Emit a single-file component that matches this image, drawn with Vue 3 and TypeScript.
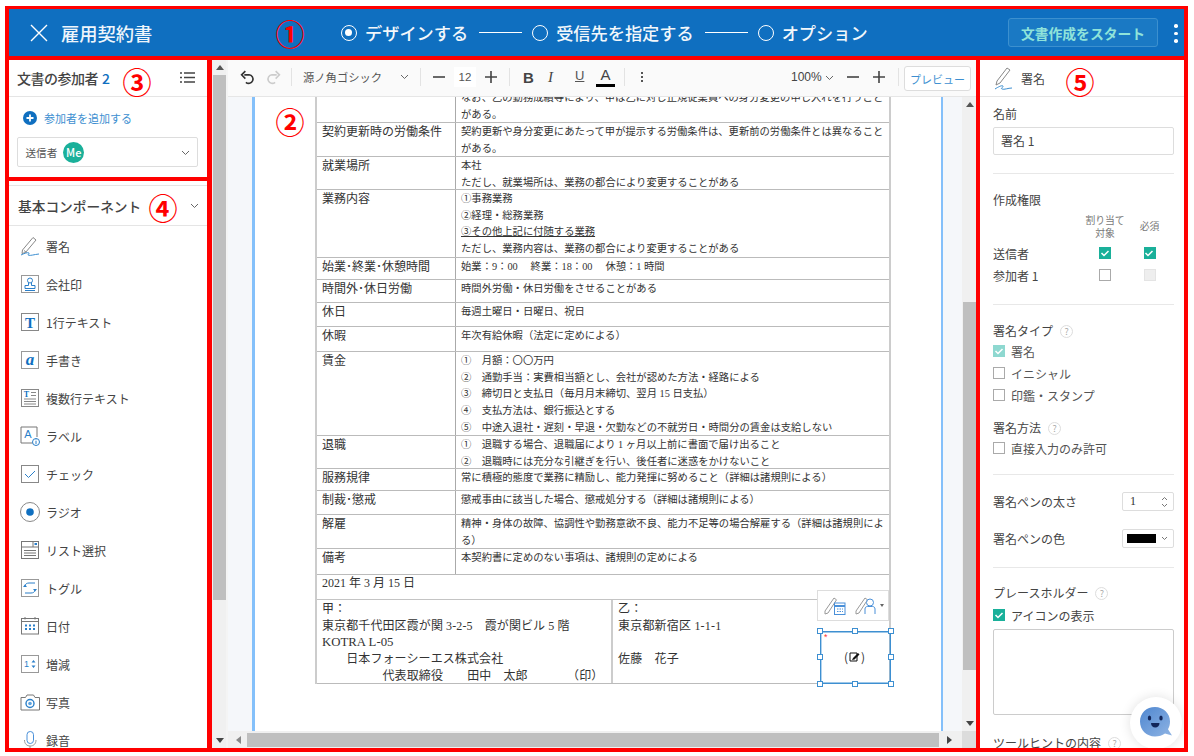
<script setup lang="ts">
interface Row { h: number; left: string; right: string[]; under?: number }

const C = '\uFF1A'
const O = '\uFF08'
const E = '\uFF09'

const rows: Row[] = [
  { h: 34, left: '', right: ['なお、乙の勤務成績等により、甲は乙に対し正規従業員への身分変更の申し入れを行うこと', 'がある。'] },
  { h: 34, left: '契約更新時の労働条件', right: ['契約更新や身分変更にあたって甲が提示する労働条件は、更新前の労働条件とは異なること', 'がある。'] },
  { h: 33, left: '就業場所', right: ['本社', 'ただし、就業場所は、業務の都合により変更することがある'] },
  { h: 68, left: '業務内容', right: ['①事務業務', '②経理・総務業務', '③その他上記に付随する業務', 'ただし、業務内容は、業務の都合により変更することがある'], under: 2 },
  { h: 22, left: '始業･終業･休憩時間', right: [`始業${C}9${C}00　 終業${C}18${C}00　 休憩${C}1 時間`] },
  { h: 23, left: '時間外･休日労働', right: ['時間外労働・休日労働をさせることがある'] },
  { h: 24, left: '休日', right: ['毎週土曜日・日曜日、祝日'] },
  { h: 25, left: '休暇', right: [`年次有給休暇${O}法定に定めによる${E}`] },
  { h: 84, left: '賃金', right: [`①　月額${C}〇〇万円`, `②　通勤手当${C}実費相当額とし、会社が認めた方法・経路による`, `③　締切日と支払日${O}毎月月末締切、翌月 15 日支払${E}`, '④　支払方法は、銀行振込とする', '⑤　中途入退社・遅刻・早退・欠勤などの不就労日・時間分の賃金は支給しない'] },
  { h: 33, left: '退職', right: ['①　退職する場合、退職届により 1 ヶ月以上前に書面で届け出ること', '②　退職時には充分な引継ぎを行い、後任者に迷惑をかけないこと'] },
  { h: 22, left: '服務規律', right: [`常に積極的態度で業務に精励し、能力発揮に努めること${O}詳細は諸規則による${E}`] },
  { h: 24, left: '制裁･懲戒', right: [`懲戒事由に該当した場合、懲戒処分する${O}詳細は諸規則による${E}`] },
  { h: 34, left: '解雇', right: [`精神・身体の故障、協調性や勤務意欲不良、能力不足等の場合解雇する${O}詳細は諸規則によ`, `る${E}`] },
  { h: 26, left: '備考', right: ['本契約書に定めのない事項は、諸規則の定めによる'] },
]

const kou = [
  `甲${C}`,
  '東京都千代田区霞が関 3-2-5　霞が関ビル 5 階',
  'KOTRA L-05',
  '　　日本フォーシーエス株式会社',
  `　　　　　代表取締役　　田中　太郎　　　 ${O}印${E}`,
]
const otsu = [`乙${C}`, '東京都新宿区 1-1-1', '\u00a0', '佐藤　花子']

const components = [
  { icon: 'pen', label: '署名' },
  { icon: 'stamp', label: '会社印' },
  { icon: 'text', label: '1行テキスト' },
  { icon: 'hand', label: '手書き' },
  { icon: 'multi', label: '複数行テキスト' },
  { icon: 'tag', label: 'ラベル' },
  { icon: 'check', label: 'チェック' },
  { icon: 'radio', label: 'ラジオ' },
  { icon: 'list', label: 'リスト選択' },
  { icon: 'toggle', label: 'トグル' },
  { icon: 'date', label: '日付' },
  { icon: 'num', label: '増減' },
  { icon: 'photo', label: '写真' },
  { icon: 'mic', label: '録音' },
]

const handles = ['tl', 'tc', 'tr', 'ml', 'mr', 'bl', 'bc', 'br']
</script>

<template>
  <div class="frame">
    <header class="topbar">
      <svg class="close" width="18" height="18" viewBox="0 0 18 18"><path d="M1 1l16 16M17 1L1 17" stroke="#fff" stroke-width="1.4" fill="none" /></svg>
      <span class="doc-title">雇用契約書</span>
      <nav class="steps">
        <span class="radio on"></span><span class="step">デザインする</span>
        <span class="line"></span>
        <span class="radio"></span><span class="step">受信先を指定する</span>
        <span class="line"></span>
        <span class="radio"></span><span class="step">オプション</span>
      </nav>
      <button class="start">文書作成をスタート</button>
      <span class="kebab"><i></i><i></i><i></i></span>
    </header>

    <aside class="left">
      <section class="participants">
        <div class="p-head">
          <span class="p-title">文書の参加者</span><b class="p-count">2</b>
          <svg class="p-list" width="15" height="11" viewBox="0 0 15 11"><path d="M0 1h2M4 1h11M0 5.500h2M4 5.500h11M0 10h2M4 10h11" stroke="#444" stroke-width="1.300" /></svg>
        </div>
        <div class="p-add">
          <svg width="14" height="14" viewBox="0 0 14 14"><circle cx="7" cy="7" r="7" fill="#0f6fc0" /><path d="M7 3.500v7M3.500 7h7" stroke="#fff" stroke-width="1.800" /></svg>
          <span>参加者を追加する</span>
        </div>
        <div class="p-select">
          <span>送信者</span><span class="me">Me</span>
          <svg class="chev" width="9" height="6" viewBox="0 0 9 6"><path d="M1 1l3.500 3.500L8 1" stroke="#666" fill="none" /></svg>
        </div>
      </section>

      <section class="palette">
        <div class="pal-head">
          <span>基本コンポーネント</span>
          <svg width="9" height="6" viewBox="0 0 9 6"><path d="M1 1l3.500 3.500L8 1" stroke="#666" fill="none" /></svg>
        </div>
        <ul class="pal-list">
          <li v-for="c in components" :key="c.label">
            <svg class="pal-icon" width="20" height="20" viewBox="0 0 20 20" fill="none">
              <template v-if="c.icon === 'pen'">
                <path d="M2.500 14L13 1.500l3 2.500L5.500 16.500l-3.500 1z" stroke="#888" />
                <path d="M4 14.500l2.500 2" stroke="#888" />
                <path d="M1 19c3-1.500 7-3 8-2s-2.500 1.500-.5 2.200S14 18.500 19 18" stroke="#3d8fd1" />
              </template>
              <template v-else-if="c.icon === 'stamp'">
                <rect x="1.500" y="1.500" width="17" height="17" stroke="#999" />
                <circle cx="10" cy="6.500" r="2.500" stroke="#2a7fc9" />
                <path d="M8.500 9v2.500H5v3h10v-3h-3.500V9M5 16.500h10" stroke="#2a7fc9" />
              </template>
              <template v-else-if="c.icon === 'text'">
                <rect x="1.500" y="1.500" width="17" height="17" stroke="#888" />
                <text x="10" y="15.500" text-anchor="middle" class="svg-t">T</text>
              </template>
              <template v-else-if="c.icon === 'hand'">
                <rect x="1.500" y="1.500" width="17" height="17" stroke="#999" />
                <text x="10" y="14.500" text-anchor="middle" class="svg-a">a</text>
              </template>
              <template v-else-if="c.icon === 'multi'">
                <rect x="1.500" y="1.500" width="17" height="17" stroke="#888" />
                <text x="6.500" y="9" text-anchor="middle" class="svg-s">T</text>
                <path d="M11 4.500h5M11 7.500h5" stroke="#888" />
                <path d="M4 11h12M4 13.500h12M4 16h12" stroke="#888" />
              </template>
              <template v-else-if="c.icon === 'tag'">
                <path d="M14 17H1V1h16v10" stroke="#777" />
                <text x="8" y="12" text-anchor="middle" class="svg-m">A</text>
                <circle cx="16" cy="16" r="3.500" stroke="#2a7fc9" fill="#fff" />
                <path d="M16 15v3M16 13.500v.8" stroke="#2a7fc9" />
              </template>
              <template v-else-if="c.icon === 'check'">
                <rect x="1.500" y="1.500" width="17" height="17" stroke="#888" />
                <path d="M5 10l3.500 3.500L15 7" stroke="#2a7fc9" />
              </template>
              <template v-else-if="c.icon === 'radio'">
                <circle cx="10" cy="10" r="9.500" stroke="#888" />
                <circle cx="10" cy="10" r="3.800" fill="#0f6fc0" />
              </template>
              <template v-else-if="c.icon === 'list'">
                <rect x="1.500" y="1.500" width="17" height="17" stroke="#777" />
                <path d="M1.500 7h17M13 1.500V7M4 10.500h12M4 13h12M4 15.500h12" stroke="#777" />
                <rect x="14.500" y="3" width="2.500" height="2" fill="#2a7fc9" />
              </template>
              <template v-else-if="c.icon === 'toggle'">
                <rect x="1.500" y="1.500" width="17" height="17" stroke="#999" />
                <path d="M5 8c0-2 2-3 4-3h6M15 12c0 2-2 3-4 3H5" stroke="#2a7fc9" />
                <path d="M3 9h4L5 6.500zM13 11h4l-2 2.500z" fill="#2a7fc9" />
              </template>
              <template v-else-if="c.icon === 'date'">
                <rect x="1.500" y="2.500" width="17" height="15.500" stroke="#777" />
                <path d="M1.500 5.500h17M5 1v2.500M15 1v2.500" stroke="#777" />
                <path d="M5 9.500h2M9 9.500h2M13 9.500h2M5 13h2M9 13h2M13 13h2" stroke="#2a7fc9" stroke-width="2" />
              </template>
              <template v-else-if="c.icon === 'num'">
                <rect x="1.500" y="1.500" width="17" height="17" stroke="#999" />
                <text x="6.500" y="13" text-anchor="middle" class="svg-n">1</text>
                <path d="M11.500 8.500h4L13.500 6zM11.500 11.500h4l-2 2.500z" fill="#2a7fc9" />
              </template>
              <template v-else-if="c.icon === 'photo'">
                <path d="M1 5.500h4.500L7 3h6.500L15 5.500h4.500V18H1z" stroke="#777" />
                <circle cx="10" cy="11.500" r="4" stroke="#2a7fc9" stroke-width="1.400" />
                <circle cx="10" cy="11.500" r="1.800" fill="#5ba3e0" />
              </template>
              <template v-else>
                <rect x="7" y="1.500" width="6.500" height="12" rx="3.200" stroke="#4a90d9" />
                <path d="M4.500 10c0 4 2.500 6 5.700 6s5.800-2 5.800-6M10 16v3" stroke="#999" />
              </template>
            </svg>
            <span>{{ c.label }}</span>
          </li>
        </ul>
      </section>
    </aside>

    <main class="center">
      <div class="outer-bar">
        <span class="arr up"></span>
        <span class="outer-thumb"></span>
        <span class="outer-rest"></span>
        <span class="arr down"></span>
      </div>
      <div class="editor">
        <div class="toolbar">
          <svg class="t-undo" width="15" height="15" viewBox="0 0 14 14" fill="none"><path d="M4 4.500h4.500a4 4 0 1 1-3 7" stroke="#333" stroke-width="1.500" /><path d="M5 1L1.500 4.500 5 8" stroke="#333" stroke-width="1.500" /></svg>
          <svg class="t-redo" width="15" height="15" viewBox="0 0 14 14" fill="none"><path d="M10 4.500H5.500a4 4 0 1 0 3 7" stroke="#ccc" stroke-width="1.500" /><path d="M9 1l3.500 3.500L9 8" stroke="#ccc" stroke-width="1.500" /></svg>
          <i class="sep s1"></i>
          <span class="t-font">源ノ角ゴシック</span>
          <svg class="t-chev" width="9" height="6" viewBox="0 0 9 6"><path d="M1 1l3.500 3.500L8 1" stroke="#666" fill="none" /></svg>
          <i class="sep s2"></i>
          <svg class="t-minus" width="12" height="12" viewBox="0 0 12 12"><path d="M0 6h12" stroke="#444" stroke-width="1.600" /></svg>
          <span class="t-size">12</span>
          <svg class="t-plus" width="12" height="12" viewBox="0 0 12 12"><path d="M0 6h12M6 0v12" stroke="#444" stroke-width="1.600" /></svg>
          <i class="sep s3"></i>
          <b class="t-b">B</b>
          <em class="t-i">I</em>
          <span class="t-u">U</span>
          <span class="t-a">A</span>
          <i class="sep s4"></i>
          <span class="t-k"><i></i><i></i><i></i></span>
          <span class="t-zoom">100%</span>
          <svg class="t-zchev" width="9" height="6" viewBox="0 0 9 6"><path d="M1 1l3.500 3.500L8 1" stroke="#666" fill="none" /></svg>
          <svg class="t-zminus" width="12" height="12" viewBox="0 0 12 12"><path d="M0 6h12" stroke="#444" stroke-width="1.600" /></svg>
          <svg class="t-zplus" width="12" height="12" viewBox="0 0 12 12"><path d="M0 6h12M6 0v12" stroke="#444" stroke-width="1.600" /></svg>
          <i class="sep s5"></i>
          <button class="preview">プレビュー</button>
        </div>

        <div class="doc-row">
          <div class="doc">
            <div class="page">
              <div class="contract">
                <div v-for="(r, i) in rows" :key="i" class="row" :style="{ height: r.h + 'px' }">
                  <div class="l">{{ r.left }}</div>
                  <div class="r"><div v-for="(t, j) in r.right" :key="j" :class="{ under: r.under === j }">{{ t }}</div></div>
                </div>
                <div class="row date-row">2021 年 3 月 15 日</div>
                <div class="row sign-row">
                  <div class="kou"><div v-for="t in kou" :key="t" :class="{ kotra: t.startsWith('KOTRA') }">{{ t }}</div></div>
                  <div class="otsu"><div v-for="t in otsu" :key="t">{{ t }}</div></div>
                </div>
              </div>

              <div class="popup">
                <svg width="22" height="20" viewBox="0 0 22 20" fill="none">
                  <path d="M1 15L10 2l2.500 1.800L4 17l-3 1z" stroke="#999" />
                  <rect x="10.500" y="7" width="10.500" height="11.500" fill="#fff" stroke="#4a90d9" />
                  <path d="M10.500 10h10.500" stroke="#4a90d9" stroke-width="2" />
                  <path d="M13 13h6M13 15.500h6" stroke="#4a90d9" stroke-dasharray="1.500 1" />
                </svg>
                <svg width="22" height="20" viewBox="0 0 22 20" fill="none">
                  <path d="M1 15L10 2l2.500 1.800L4 17l-3 1z" stroke="#999" />
                  <circle cx="15" cy="6.500" r="3.500" fill="#fff" stroke="#4a90d9" />
                  <path d="M10 18v-5c0-1.500 1-2.500 2.500-2.500h5c1.500 0 2.500 1 2.500 2.500v5" stroke="#4a90d9" />
                </svg>
                <span class="caret"></span>
              </div>

              <div class="field">
                <i class="req">*</i>
                <span class="field-mark">(<svg width="11" height="10" viewBox="0 0 11 10"><path d="M1 1h7v8H1z" fill="none" stroke="#111" /><path d="M3 8l1-2 5-5 1.500 1.500-5 5z" fill="#111" /></svg>)</span>
                <i v-for="h in handles" :key="h" class="handle" :class="h"></i>
              </div>
            </div>
          </div>
          <div class="v-bar">
            <span class="arr up"></span>
            <span class="v-top"></span>
            <span class="v-thumb"></span>
            <span class="v-rest"></span>
            <span class="arr down"></span>
          </div>
        </div>

        <div class="h-bar">
          <span class="arr lf"></span>
          <span class="h-thumb"></span>
          <span class="arr rt"></span>
          <span class="corner"></span>
        </div>
      </div>
    </main>

    <aside class="props">
      <div class="pr-head">
        <svg width="20" height="24" viewBox="0 0 20 24" fill="none">
          <path d="M3 15L13 2l3 2L6 17l-4 2z" stroke="#888" />
          <path d="M1 23c3-2 7-4 8-3s-3 2-1 3 6-1 10-1" stroke="#3d8fd1" />
        </svg>
        <span>署名</span>
      </div>
      <div class="pr-body">
        <div class="lab first">名前</div>
        <div class="input">署名 1</div>
        <hr class="h1" />
        <div class="lab perm">作成権限</div>
        <div class="pgrid">
          <span></span><span class="th">割り当て<br />対象</span><span class="th">必須</span>
          <span class="pr">送信者</span><span class="cell"><span class="cb on"><svg width="12" height="12" viewBox="0 0 12 12"><path d="M2.500 6l2.500 2.500 4.500-4.500" stroke="#fff" stroke-width="1.500" fill="none" /></svg></span></span><span class="cell"><span class="cb on"><svg width="12" height="12" viewBox="0 0 12 12"><path d="M2.500 6l2.500 2.500 4.500-4.500" stroke="#fff" stroke-width="1.500" fill="none" /></svg></span></span>
          <span class="pr">参加者 1</span><span class="cell"><span class="cb"></span></span><span class="cell"><span class="cb dis"></span></span>
        </div>
        <hr class="h2" />
        <div class="lab sig">署名タイプ<span class="q">?</span></div>
        <label class="opt"><span class="cb soft"><svg width="12" height="12" viewBox="0 0 12 12"><path d="M2.500 6l2.500 2.500 4.500-4.500" stroke="#fff" stroke-width="1.500" fill="none" /></svg></span>署名</label>
        <label class="opt"><span class="cb"></span>イニシャル</label>
        <label class="opt"><span class="cb"></span>印鑑・スタンプ</label>
        <div class="lab method">署名方法<span class="q">?</span></div>
        <label class="opt"><span class="cb"></span>直接入力のみ許可</label>
        <hr class="h3" />
        <div class="pair p1">
          <span>署名ペンの太さ</span>
          <div class="mini"><span class="num">1</span><svg width="7" height="12" viewBox="0 0 7 12"><path d="M1 4l2.500-2.500L6 4M1 8l2.500 2.500L6 8" stroke="#777" fill="none" /></svg></div>
        </div>
        <div class="pair p2">
          <span>署名ペンの色</span>
          <div class="mini"><i class="swatch"></i><svg width="7" height="5" viewBox="0 0 7 5"><path d="M1 1l2.500 2.500L6 1" stroke="#777" fill="none" /></svg></div>
        </div>
        <hr class="h4" />
        <div class="lab ph">プレースホルダー<span class="q">?</span></div>
        <label class="opt ph-opt"><span class="cb on"><svg width="12" height="12" viewBox="0 0 12 12"><path d="M2.500 6l2.500 2.500 4.500-4.500" stroke="#fff" stroke-width="1.500" fill="none" /></svg></span>アイコンの表示</label>
        <div class="area"></div>
        <div class="lab tip">ツールヒントの内容<span class="q">?</span></div>
      </div>
      <div class="chat">
        <svg width="34" height="34" viewBox="0 0 34 34">
          <defs><linearGradient id="bub" x1="0" y1="0" x2="1" y2="1"><stop offset="0" stop-color="#4f87d0" /><stop offset="1" stop-color="#8fb4e4" /></linearGradient></defs>
          <path d="M16 1c8.500 0 15 6.500 15 14.500 0 3-.7 5.500-2 7.700l4 6.300-7-2c-2.700 2-6 3-10 3C7.500 30.500 1 24 1 15.500S7.500 1 16 1z" fill="url(#bub)" />
          <ellipse cx="10.500" cy="12" rx="1.700" ry="2.600" fill="#12265a" />
          <ellipse cx="22" cy="12" rx="1.700" ry="2.600" fill="#12265a" />
          <path d="M12 17h8.500c0 2.800-1.800 4.500-4.250 4.500S12 19.800 12 17z" fill="#12265a" />
        </svg>
      </div>
    </aside>

    <span class="ann a1">①</span>
    <span class="ann a2">②</span>
    <span class="ann a3">③</span>
    <span class="ann a4">④</span>
    <span class="ann a5">⑤</span>
  </div>
</template>

<style>
html, body { margin: 0; background: #fff; overflow: hidden; }
</style>

<style scoped>
* { box-sizing: border-box; }
.frame {
  position: relative;
  margin: 6px 6px 0 5px;
  width: 1183px;
  height: 746px;
  padding: 3px 4px 4px;
  background: #f00;
  display: grid;
  grid-template-columns: 198px 765px 204px;
  grid-template-rows: 47px 688px;
  column-gap: 4px;
  row-gap: 4px;
  font-family: "Noto Sans CJK JP", "Noto Sans", sans-serif;
  color: #444;
  font-size: 12px;
}

/* header */
.topbar {
  grid-column: 1 / -1;
  background: #0f6fc0;
  display: flex;
  align-items: center;
  color: #fff;
  position: relative;
}
.close { margin-left: 21px; }
.doc-title { margin-left: 13px; font-size: 18.300px; font-weight: 500; color: #eef5fb; }
.steps { position: absolute; left: 332px; top: 0; height: 47px; display: flex; align-items: center; }
.radio { width: 16px; height: 16px; border: 1.500px solid #fff; border-radius: 50%; position: relative; flex: none; }
.radio.on::after { content: ""; position: absolute; left: 3px; top: 3px; width: 7px; height: 7px; background: #fff; border-radius: 50%; }
.step { margin-left: 8px; font-size: 17.200px; font-weight: 500; color: #f2f7fb; white-space: nowrap; }
.line { width: 43px; height: 1px; background: #fff; margin: 0 10px 0 11px; flex: none; }
.start {
  position: absolute; left: 999px; top: 9px; width: 150px; height: 29px;
  background: #1a79c4; border: 1px solid #3c90cf; border-radius: 3px;
  color: #8fe3da; font: 700 13.800px "Noto Sans CJK JP", sans-serif; padding: 0;
}
.kebab { position: absolute; left: 1165px; top: 15px; display: flex; flex-direction: column; gap: 4px; }
.kebab i { width: 3.500px; height: 3.500px; background: #fff; border-radius: 50%; }

/* left */
.left { display: flex; flex-direction: column; gap: 4px; min-height: 0; }
.participants { height: 117px; background: #fff; flex: none; }
.p-head { height: 37px; border-bottom: 1px solid #e5e5e5; display: flex; align-items: center; padding-left: 8px; position: relative; }
.p-title { font-size: 14px; font-weight: 500; color: #444; letter-spacing: -0.500px; }
.p-count { font-size: 14px; color: #0f6fc0; margin-left: 4px; font-weight: 500; }
.p-list { position: absolute; left: 171px; top: 12px; }
.p-add { display: flex; align-items: center; margin: 14px 0 0 14px; gap: 7px; color: #3d8fd1; font-size: 11px; height: 14px; }
.p-select {
  margin: 12px 0 0 7.500px; width: 181px; height: 30px; border: 1px solid #ddd; border-radius: 2px;
  display: flex; align-items: center; padding-left: 8px; font-size: 10.600px; position: relative; color: #555;
}
.me { margin-left: 6px; width: 21px; height: 21px; border-radius: 50%; background: #1ab09a; color: #fff; font-size: 11px; font-weight: 500; display: flex; align-items: center; justify-content: center; }
.chev { position: absolute; right: 7px; top: 12px; }
.palette { flex: 1; min-height: 0; background: #fff; overflow: hidden; padding-top: 4px; }
.pal-head {
  height: 41px; border-top: 1px solid #e5e5e5; border-bottom: 1px solid #e5e5e5;
  display: flex; align-items: center; justify-content: space-between; padding: 0 8px 0 9px;
  font-size: 13.700px; font-weight: 500; color: #444;
}
.pal-list { list-style: none; margin: 0; padding: 1px 0 0; }
.pal-list li { height: 38px; display: flex; align-items: center; padding-left: 11px; color: #444; }
.pal-list li span { margin-left: 6px; }
.pal-icon { flex: none; }
.svg-t { font: 700 15px "Liberation Serif", serif; fill: #0f6fc0; }
.svg-a { font: italic 700 17px "Liberation Serif", serif; fill: #0f6fc0; }
.svg-s { font: 700 8px "Liberation Serif", serif; fill: #0f6fc0; }
.svg-m { font: 400 11px "Liberation Sans", sans-serif; fill: #2a7fc9; }
.svg-n { font: 400 9px "Liberation Sans", sans-serif; fill: #2a7fc9; }

/* center */
.center { margin-left: 1px; display: flex; background: #f4f4f4; min-height: 0; min-width: 0; }
.outer-bar { width: 14px; flex: none; background: #f0f0f0; display: flex; flex-direction: column; align-items: stretch; padding-left: 1px; }
.arr { flex: none; width: 0; height: 0; border-style: solid; border-color: transparent; display: block; }
.arr.up { border-width: 0 4px 5px; border-bottom-color: #555; margin: 5px auto; }
.arr.down { border-width: 5px 4px 0; border-top-color: #444; margin: 5px auto; }
.arr.lf { border-width: 4px 5px 4px 0; border-right-color: #888; margin-left: 8px; }
.arr.rt { border-width: 4px 0 4px 5px; border-left-color: #444; margin-left: 8px; }
.outer-thumb { height: 525px; background: #bfbfbf; flex: none; }
.outer-rest { flex: 1; }
.editor { flex: 1; margin-left: 2px; min-width: 0; display: flex; flex-direction: column; background: #fff; }

.toolbar { height: 37px; flex: none; background: #fafafa; border-bottom: 1px solid #e6e6e6; position: relative; }
.toolbar > * { position: absolute; }
.t-undo { left: 12px; top: 10px; }
.t-redo { left: 38px; top: 10px; }
.sep { width: 1px; height: 18px; top: 8px; background: #e3e3e3; }
.s1 { left: 63px; } .s2 { left: 192px; } .s3 { left: 281px; } .s4 { left: 396px; } .s5 { left: 670px; }
.t-font { left: 75px; top: 9px; font-size: 11.300px; line-height: 17px; color: #555; }
.t-chev { left: 172px; top: 14px; }
.t-minus { left: 205px; top: 11px; }
.t-size { left: 226px; top: 7px; width: 22px; height: 20px; background: #fff; text-align: center; font: 400 11.500px/20px "Liberation Sans", sans-serif; color: #555; }
.t-plus { left: 257px; top: 11px; }
.t-b { left: 295px; top: 9px; font: 700 15px/17px "Liberation Sans", sans-serif; color: #444; }
.t-i { left: 320px; top: 9px; font: italic 400 15px/17px "Liberation Serif", serif; color: #444; }
.t-u { left: 347px; top: 8px; font: 400 13px/15px "Liberation Sans", sans-serif; color: #555; text-decoration: underline; }
.t-a { left: 368px; top: 7px; width: 19px; height: 20px; border-bottom: 3px solid #000; text-align: center; font: 400 15px/16px "Liberation Sans", sans-serif; color: #444; }
.t-k { left: 413px; top: 12px; display: flex; flex-direction: column; gap: 2px; }
.t-k i { width: 2px; height: 2px; background: #555; }
.t-zoom { left: 563px; top: 9px; font: 400 12px/17px "Liberation Sans", sans-serif; color: #444; }
.t-zchev { left: 597px; top: 15px; }
.t-zminus { left: 619px; top: 11px; }
.t-zplus { left: 645px; top: 11px; }
.preview { left: 676px; top: 6px; width: 67px; height: 25px; padding: 0; background: #fff; border: 1px solid #ddd; border-radius: 3px; color: #3d8fd1; font: 400 11px "Noto Sans CJK JP", sans-serif; }

.doc-row { flex: 1; min-height: 0; display: flex; }
.doc { flex: 1; min-width: 0; background: #f5f7fa; padding: 0 19px 0 24px; overflow: hidden; }
.page { position: relative; height: 100%; background: #fff; border-left: 3px solid #84c0fa; border-right: 2px solid #84c0fa; overflow: hidden; }
.contract {
  margin: -9px 0 0 60px; width: 576px; border-top: 1px solid #bbb; border-left: 2px solid #ccc; border-right: 2px solid #ccc;
  color: #333; line-height: 16.670px;
  font-family: "Liberation Serif", "Noto Sans CJK JP", serif;
}
.row { display: flex; border-bottom: 1px solid #bbb; overflow: hidden; }
.l { width: 139px; flex: none; padding: 1px 0 0 5px; font-size: 12px; border-right: 1px solid #aaa; }
.r { flex: 1; padding: 1px 0 0 5px; font-size: 10.320px; white-space: nowrap; }
.under { text-decoration: underline; }
.date-row { height: 25px; font-size: 12px; padding-left: 5px; border-bottom-color: #c4c4c4; }
.sign-row { height: 84px; font-size: 12px; white-space: pre; }
.kou { width: 296px; flex: none; padding: 1px 0 0 5px; border-right: 2px solid #ccc; letter-spacing: .1px; }
.kotra { font-size: 12.800px; letter-spacing: 0; }
.otsu { padding: 1px 0 0 5px; letter-spacing: .2px; }

.popup {
  position: absolute; left: 562px; top: 493px; width: 72px; height: 31px; background: #fff; border: 1px solid #ddd;
  display: flex; align-items: center; padding-left: 6px; gap: 9px;
}
.caret { width: 0; height: 0; border: 2px solid transparent; border-top: 3px solid #666; margin: 2px 0 0 -6px; }
.field { position: absolute; left: 565px; top: 534px; width: 71px; height: 53px; border: 1px solid #3d8fd1; box-shadow: inset 0 0 0 .4px #3d8fd1; }
.req { position: absolute; left: 3px; top: 1px; font: 400 9px/9px "Liberation Sans", sans-serif; color: #f33; }
.field-mark { position: absolute; left: 23px; top: 17px; display: flex; align-items: center; gap: 1px; font: 400 12px/16px "Noto Sans CJK JP", sans-serif; color: #333; }
.handle { position: absolute; width: 6px; height: 6px; background: #fff; border: 1px solid #3d8fd1; }
.tl { left: -4px; top: -4px; } .tc { left: 31px; top: -4px; } .tr { right: -4px; top: -4px; }
.ml { left: -4px; top: 22px; } .mr { right: -4px; top: 22px; }
.bl { left: -4px; bottom: -4px; } .bc { left: 31px; bottom: -4px; } .br { right: -4px; bottom: -4px; }

.v-bar { width: 14px; flex: none; background: #f0f0f0; display: flex; flex-direction: column; padding-left: 1px; }
.v-top { height: 190px; flex: none; }
.v-thumb { height: 368px; flex: none; background: #bfbfbf; }
.v-rest { flex: 1; }
.h-bar { height: 17px; flex: none; background: #f0f0f0; display: flex; align-items: center; }
.h-thumb { width: 692px; height: 14px; margin-left: 6px; background: #bfbfbf; flex: none; }
.corner { width: 14px; height: 17px; background: #dcdcdc; margin-left: auto; flex: none; }

/* right */
.props { position: relative; background: #fff; overflow: hidden; min-height: 0; }
.pr-head { height: 37px; border-bottom: 1px solid #e5e5e5; display: flex; align-items: center; padding-left: 14px; gap: 7px; }
.pr-body { padding: 0 10px 0 13px; color: #444; }
.lab { height: 18px; line-height: 18px; display: flex; align-items: center; }
.first { margin-top: 8px; }
.input { margin-top: 4px; height: 28px; border: 1px solid #ddd; border-radius: 2px; line-height: 26px; padding-left: 7px; }
hr { border: 0; height: 1px; background: #e8e8e8; margin: 0; }
.h1 { margin-top: 18px; }
.perm { margin-top: 17px; }
.pgrid { margin-top: 3px; display: grid; grid-template-columns: 92px 40px 49px; grid-template-rows: 30px 22px 22px; align-items: center; }
.th { font-size: 9.800px; line-height: 13px; color: #777; text-align: center; white-space: nowrap; padding-bottom: 1px; }
.cell { display: flex; justify-content: center; }
.cb { width: 12px; height: 12px; border: 1.500px solid #aaa; background: #fff; display: inline-block; flex: none; position: relative; }
.cb svg { position: absolute; left: -1.500px; top: -1.500px; }
.cb.on { background: #1ab09a; border-color: #1ab09a; }
.cb.soft { background: #8ed8d0; border-color: #8ed8d0; }
.cb.dis { background: #eee; border-color: #e4e4e4; }
.h2 { margin-top: 18px; }
.sig { margin-top: 17px; }
.opt { display: flex; align-items: center; height: 22px; gap: 6px; color: #555; }
.q { margin-left: 7px; width: 13px; height: 13px; border: 1px solid #ddd; border-radius: 50%; font-size: 9px; line-height: 11px; text-align: center; color: #aaa; display: inline-block; }
.method { margin-top: 13px; }
.h3 { margin-top: 15px; }
.pair { display: flex; align-items: center; justify-content: space-between; height: 19px; }
.p1 { margin-top: 17px; }
.p2 { margin-top: 18px; }
.mini { width: 52px; height: 19px; border: 1px solid #ddd; border-radius: 2px; display: flex; align-items: center; justify-content: space-between; padding: 0 5px 0 4px; }
.num { font: 400 12px "Liberation Serif", serif; color: #333; margin-left: 3px; }
.swatch { width: 29px; height: 9px; background: #000; }
.h4 { margin-top: 19px; }
.ph { margin-top: 16px; }
.ph-opt { margin-top: 2px; color: #444; }
.area { margin-top: 3px; height: 86px; border: 1px solid #ccc; border-radius: 2px; }
.tip { margin-top: 19px; }
.chat {
  position: absolute; left: 150px; top: 637px; width: 52px; height: 52px; border-radius: 50%; background: #fff;
  box-shadow: 0 0 12px rgba(0, 0, 0, .12); display: flex; align-items: center; justify-content: center;
}

/* annotations */
.ann { position: absolute; color: #f00; font-size: 29px; line-height: 30px; width: 30px; text-align: center; font-weight: 700; }
.a1 { left: 270px; top: 12px; }
.a2 { left: 270px; top: 100px; }
.a3 { left: 117px; top: 60px; }
.a4 { left: 143px; top: 186px; }
.a5 { left: 1060px; top: 60px; }
</style>
